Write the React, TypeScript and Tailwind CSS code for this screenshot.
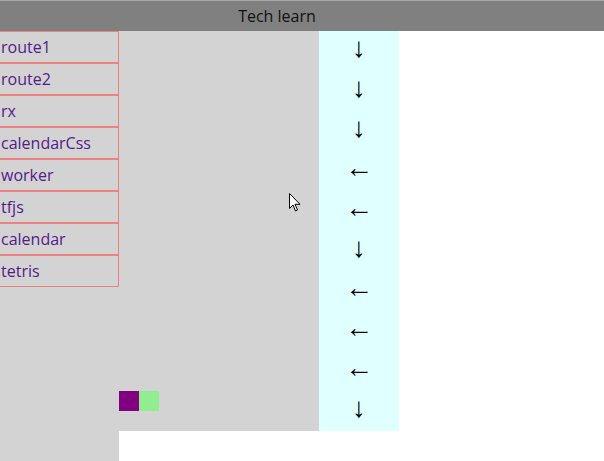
import React from "react";

const links = ["route1", "route2", "rx", "calendarCss", "worker", "tfjs", "calendar", "tetris"];
const arrows = ["↓", "↓", "↓", "←", "←", "↓", "←", "←", "←", "↓"];

export default function App() {
  return (
    <div className="relative h-[461px] w-[604px] overflow-hidden bg-white flex flex-col" style={{ fontFamily: '"Open Sans", "Noto Sans", sans-serif' }}>
      <div className="h-[31px] shrink-0 bg-[#808080] border-t border-[#a8a8a8] flex items-center">
        <div className="w-[554px] text-center text-[16px] text-[#111] leading-none">Tech learn</div>
      </div>
      <div className="flex flex-1">
        <div className="w-[119px] shrink-0 bg-[#d3d3d3] overflow-hidden">
          <div className="-ml-px w-[120px]">
            {links.map((l) => (
              <div key={l} className="h-[32px] border border-[#f08080] flex items-center text-[16px] text-[#551a8b] pl-[1px] leading-none">
                {l}
              </div>
            ))}
          </div>
        </div>
        <div className="flex flex-col">
          <div className="flex">
            <div className="w-[200px] h-[400px] bg-[#d3d3d3] grid grid-cols-10 grid-rows-20">
              <div className="row-start-19 col-start-1 bg-[#800080]" />
              <div className="row-start-19 col-start-2 bg-[#90ee90]" />
            </div>
            <div className="w-[80px] h-[400px] bg-[#e0ffff] flex flex-col">
              {arrows.map((a, i) => (
                <div key={i} className="h-[40px] flex items-center justify-center text-[28px] leading-none text-black pb-[6px]" style={{ fontFamily: '"Liberation Sans", sans-serif' }}>
                  {a}
                </div>
              ))}
            </div>
          </div>
        </div>
      </div>
      <svg className="absolute left-[289px] top-[193px]" width="12" height="19" viewBox="0 0 12 19">
        <path d="M0.5 0.5 L0.5 15.5 L4 12 L6.5 18 L8.5 17 L6 11.3 L11 11.3 Z" fill="white" stroke="black" strokeWidth="1" />
      </svg>
    </div>
  );
}
